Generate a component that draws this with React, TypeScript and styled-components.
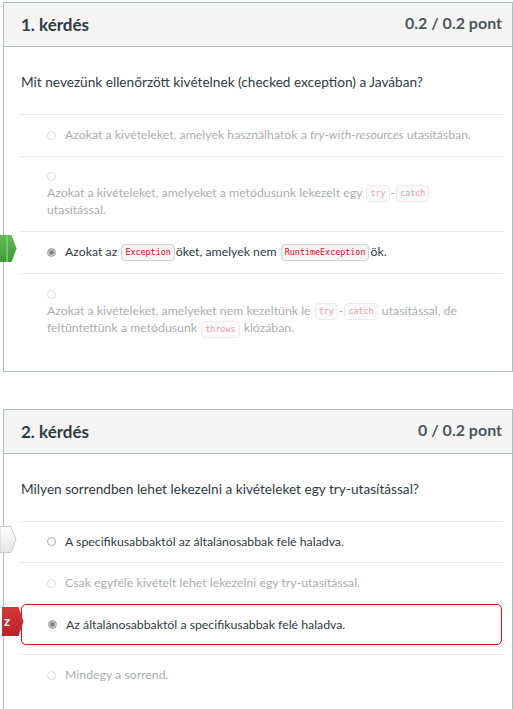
import styled, { createGlobalStyle, css } from "styled-components";
import type { ReactNode } from "react";

const GlobalStyle = createGlobalStyle`
  body {
    margin: 0;
    background: #fff;
    font-family: Lato, "Noto Sans", sans-serif;
    color: #2d3b45;
  }
`;

const Page = styled.div`
  display: flex;
  flex-direction: column;
  gap: 37px;
  padding: 2px 0 0 3px;
`;

const Card = styled.section`
  width: 510px;
  box-sizing: border-box;
  border: 1px solid #b7bcc0;
  background: #fff;
`;

const Header = styled.header`
  height: 43px;
  display: flex;
  align-items: center;
  justify-content: space-between;
  padding: 0 10px 0 17px;
  background: #f5f5f5;
  border-bottom: 1px solid #b7bcc0;
`;

const Title = styled.h2`
  margin: 0;
  font-size: 17px;
  font-weight: 700;
  color: #2d3b45;
`;

const Points = styled.span`
  align-self: flex-start;
  margin-top: 10px;
  font-size: 16px;
  font-weight: 700;
  color: #4b565e;
`;

const Body = styled.div`
  padding: 25px 9px 21px 16px;
`;

const Question = styled.p`
  margin: 0 0 22px 1px;
  font-size: 13.65px;
  line-height: 20px;
`;

const AnswerList = styled.div`
  display: flex;
  flex-direction: column;
`;

const Row = styled.div<{ $wrong?: boolean }>`
  position: relative;
  padding: 12px 8px 12px 27px;
  border-top: 1px solid #e6e8ea;
  font-size: 12.3px;
  line-height: 16.5px;

  ${(p) =>
    p.$wrong &&
    css`
      margin: 0 1px 9px;
      padding: 12px 8px 11px 26px;
      border: 1px solid #ee0612;
      border-radius: 5px;
    `}
`;

const Content = styled.div<{ $dim?: boolean; $block?: boolean }>`
  display: flex;
  flex-direction: ${(p) => (p.$block ? "column" : "row")};
  align-items: ${(p) => (p.$block ? "flex-start" : "center")};
  gap: ${(p) => (p.$block ? "0" : "9px")};
  opacity: ${(p) => (p.$dim ? 0.42 : 1)};
`;

const RadioLine = styled.span`
  display: flex;
  align-items: center;
  height: 16.5px;
`;

const Radio = styled.span<{ $checked?: boolean }>`
  display: inline-block;
  flex: none;
  width: 9px;
  height: 9px;
  box-sizing: border-box;
  border-radius: 50%;
  border: 1px solid #a9adb0;
  background: #fff;

  ${(p) =>
    p.$checked &&
    css`
      border-color: #9a9ea2;
      background: radial-gradient(circle, #7d8185 0 38%, #c9cccf 52%);
    `}
`;

const Text = styled.span<{ $block?: boolean }>`
  display: block;
  max-width: ${(p) => (p.$block ? "418px" : "none")};
`;

const Code = styled.code`
  display: inline-block;
  margin: 0 1px;
  padding: 0 3px;
  font-family: "DejaVu Sans Mono", monospace;
  font-size: 8.4px;
  line-height: 15px;
  vertical-align: middle;
  color: #e4061c;
  background: #f5f5f6;
  border: 1px solid #cfd2d4;
  border-radius: 4px;
`;

const Marker = styled.div<{ $top: number }>`
  position: absolute;
  left: -20px;
  top: ${(p) => p.$top}px;
  display: flex;
`;

const MarkerLabel = styled.span`
  position: absolute;
  left: 2px;
  top: 7px;
  font-size: 13px;
  font-weight: 700;
  line-height: 14px;
  color: #fff;
`;

type Kind = "correct" | "neutral" | "wrong";

function AnswerMarker({ kind }: { kind: Kind }) {
  if (kind === "correct") {
    return (
      <Marker $top={3}>
        <svg width="17" height="27" viewBox="0 0 17 27">
          <defs>
            <linearGradient id="g" x1="0" y1="0" x2="0" y2="1">
              <stop offset="0" stopColor="#62bb55" />
              <stop offset="1" stopColor="#3f9a3c" />
            </linearGradient>
          </defs>
          <polygon points="0,0 11.5,0 16.5,13.5 11.5,27 0,27" fill="url(#g)" />
          <rect x="6.5" y="0" width="1.2" height="27" fill="#8fd58a" />
        </svg>
      </Marker>
    );
  }
  if (kind === "neutral") {
    return (
      <Marker $top={4}>
        <svg width="17" height="27" viewBox="0 0 17 27">
          <defs>
            <linearGradient id="n" x1="0" y1="0" x2="0" y2="1">
              <stop offset="0" stopColor="#ffffff" />
              <stop offset="1" stopColor="#e4e4e4" />
            </linearGradient>
          </defs>
          <polygon
            points="0,0.5 11,0.5 16,13.5 11,26.5 0,26.5"
            fill="url(#n)"
            stroke="#c9cccf"
            strokeWidth="1"
          />
        </svg>
      </Marker>
    );
  }
  return (
    <Marker $top={2}>
      <svg width="22" height="29" viewBox="0 0 22 29">
        <defs>
          <linearGradient id="r" x1="0" y1="0" x2="0" y2="1">
            <stop offset="0" stopColor="#d63838" />
            <stop offset="1" stopColor="#b8242a" />
          </linearGradient>
        </defs>
        <polygon points="0,0 16.5,0 21.5,14.5 16.5,29 0,29" fill="url(#r)" />
      </svg>
      <MarkerLabel>z</MarkerLabel>
    </Marker>
  );
}

type AnswerProps = {
  children: ReactNode;
  dim?: boolean;
  checked?: boolean;
  block?: boolean;
  wrong?: boolean;
  marker?: Kind;
};

function Answer({ children, dim, checked, block, wrong, marker }: AnswerProps) {
  return (
    <Row $wrong={wrong}>
      {marker && <AnswerMarker kind={marker} />}
      <Content $dim={dim} $block={block}>
        {block ? (
          <RadioLine>
            <Radio $checked={checked} />
          </RadioLine>
        ) : (
          <Radio $checked={checked} />
        )}
        <Text $block={block}>{children}</Text>
      </Content>
    </Row>
  );
}

export default function App() {
  return (
    <>
      <GlobalStyle />
      <Page>
        <Card>
          <Header>
            <Title>1. kérdés</Title>
            <Points>0.2 / 0.2 pont</Points>
          </Header>
          <Body>
            <Question>
              Mit nevezünk ellenőrzött kivételnek (checked exception) a Javában?
            </Question>
            <AnswerList>
              <Answer dim>
                Azokat a kivételeket, amelyek használhatók a{" "}
                <em>try-with-resources</em> utasításban.
              </Answer>
              <Answer dim block>
                Azokat a kivételeket, amelyeket a metódusunk lekezelt egy{" "}
                <Code>try</Code>-<Code>catch</Code> utasítással.
              </Answer>
              <Answer checked marker="correct">
                <span>
                  Azokat az <Code>Exception</Code>öket, amelyek nem{" "}
                  <Code>RuntimeException</Code>ök.
                </span>
              </Answer>
              <Answer dim block>
                Azokat a kivételeket, amelyeket nem kezeltünk le{" "}
                <Code>try</Code>-<Code>catch</Code> utasítással, de
                feltüntettünk a metódusunk <Code>throws</Code> klózában.
              </Answer>
            </AnswerList>
          </Body>
        </Card>

        <Card>
          <Header>
            <Title>2. kérdés</Title>
            <Points>0 / 0.2 pont</Points>
          </Header>
          <Body>
            <Question>
              Milyen sorrendben lehet lekezelni a kivételeket egy
              try-utasítással?
            </Question>
            <AnswerList>
              <Answer marker="neutral">
                A specifikusabbaktól az általánosabbak felé haladva.
              </Answer>
              <Answer dim>
                Csak egyféle kivételt lehet lekezelni egy try-utasítással.
              </Answer>
              <Answer checked wrong marker="wrong">
                Az általánosabbaktól a specifikusabbak felé haladva.
              </Answer>
              <Answer dim>Mindegy a sorrend.</Answer>
            </AnswerList>
          </Body>
        </Card>
      </Page>
    </>
  );
}
